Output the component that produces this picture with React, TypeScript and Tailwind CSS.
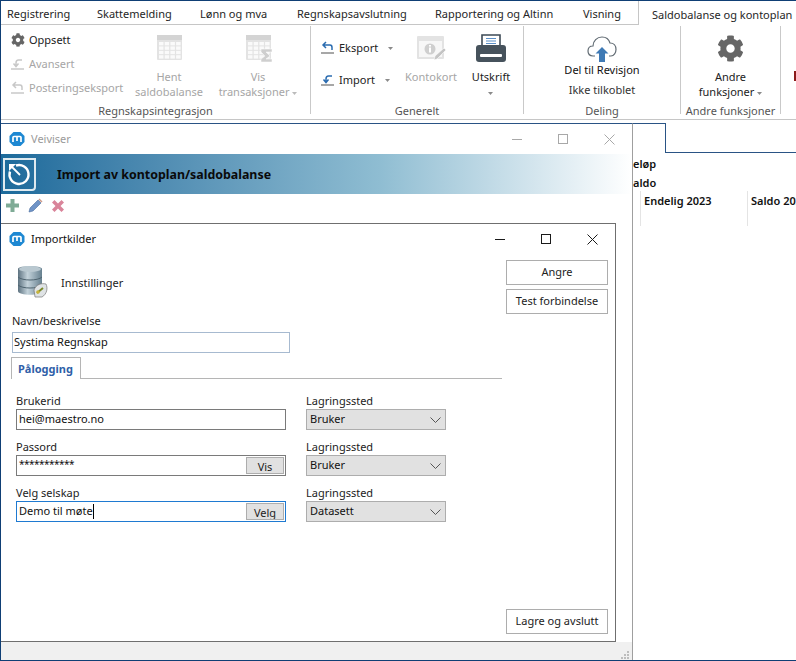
import { FaCog } from "react-icons/fa";

const font = { fontFamily: '"Noto Sans", sans-serif' };

const tabs = [
  { label: "Registrering", w: "w-[90px]" },
  { label: "Skattemelding", w: "w-[103px]" },
  { label: "Lønn og mva", w: "w-[97px]" },
  { label: "Regnskapsavslutning", w: "w-[138px]" },
  { label: "Rapportering og Altinn", w: "w-[148px]" },
  { label: "Visning", w: "w-[47px]" },
];

const Logo = () => (
  <svg width="16" height="16" viewBox="0 0 16 16" className="shrink-0">
    <path d="M4.5 1h7L15.5 5v6L11.500 15h-7L.5 11V5z" fill="#1e88d2" />
    <path d="M4 11V6.500q0-1 1-1h6q1 0 1 1V11M8 6v4" stroke="#fff" strokeWidth="1.700" fill="none" />
  </svg>
);

const ArrowBack = ({ color = "#2b6cb0" }: { color?: string }) => (
  <svg width="14" height="14" viewBox="0 0 14 14">
    <path d="M5 1 2 4l3 3M2.500 4H9q2 0 2 2.500V9" stroke={color} strokeWidth="1.500" fill="none" />
    <path d="M0 12h13" stroke={color === "#2b6cb0" ? "#8a8a8a" : color} strokeWidth="1.500" />
  </svg>
);

const ArrowIn = ({ color = "#2b6cb0" }: { color?: string }) => (
  <svg width="14" height="14" viewBox="0 0 14 14">
    <path d="M11 3H7.500Q5 3 5 6v3M2.500 6.500 5 9.500l2.500-3" stroke={color} strokeWidth="1.500" fill="none" />
    <path d="M0 12h13" stroke={color === "#2b6cb0" ? "#8a8a8a" : color} strokeWidth="1.500" />
  </svg>
);

const Caret = ({ color = "#8a8a8a" }: { color?: string }) => (
  <svg width="5" height="3" viewBox="0 0 5 3" className="inline-block">
    <path d="M0 0h5L2.500 3z" fill={color} />
  </svg>
);

const GridIcon = ({ sigma }: { sigma?: boolean }) => (
  <svg width="30" height="28" viewBox="0 0 30 28">
    <rect x="3" y="1" width="25" height="25" rx="1" fill="#e3e3e3" />
    <rect x="3" y="1" width="25" height="5" fill="#d4d4d4" />
    {[0, 1, 2, 3].map((r) =>
      [0, 1, 2, 3].map((c) => (
        <rect key={`${r}-${c}`} x={5 + c * 5.700} y={8 + r * 4.400} width="4.500" height="3.400" fill="#fafafa" />
      )),
    )}
    {sigma && <path d="M18 15h11v3h-6l4 4-4 3h6v3H18v-3l4-3-4-4z" fill="#cfcfcf" stroke="#fff" strokeWidth="0.500" />}
  </svg>
);

const SmallAction = ({ icon, label, muted }: { icon: React.ReactNode; label: string; muted?: boolean }) => (
  <div className="flex items-center gap-[4px] h-[24px]">
    <span className="w-[14px] h-[14px] flex items-center justify-center">{icon}</span>
    <span className={muted ? "text-[#a6a6a6]" : "text-[#222]"}>{label}</span>
  </div>
);

const BigAction = ({
  icon,
  lines,
  muted,
  w,
}: {
  icon: React.ReactNode;
  lines: React.ReactNode[];
  muted?: boolean;
  w: string;
}) => (
  <div className={`flex flex-col items-center ${w} ${muted ? "text-[#a6a6a6]" : "text-[#222]"}`}>
    <div className="h-[36px] flex items-end justify-center">{icon}</div>
    <div className="mt-[7px] leading-[15px] text-center whitespace-nowrap">
      {lines.map((l, i) => (
        <div key={i}>{l}</div>
      ))}
    </div>
  </div>
);

const Group = ({ w, label, children }: { w: string; label: string; children: React.ReactNode }) => (
  <div className={`${w} h-[88px] flex flex-col shrink-0 border-r border-[#c9c9c9]`}>
    <div className="h-[77px] shrink-0 flex">{children}</div>
    <div className="text-center text-[#555] leading-[16px] whitespace-nowrap">{label}</div>
  </div>
);

const WinButtons = ({ dark }: { dark?: boolean }) => {
  const c = dark ? "#1a1a1a" : "#a8a8a8";
  return (
    <div className="flex items-center gap-[35px]">
      <svg width="11" height="11" viewBox="0 0 11 11">
        <path d="M0 5.500h10" stroke={c} />
      </svg>
      <svg width="11" height="11" viewBox="0 0 11 11">
        <rect x=".5" y=".5" width="9" height="9" stroke={c} fill="none" />
      </svg>
      <svg width="11" height="11" viewBox="0 0 11 11">
        <path d="M.5.5l10 10M10.500.5l-10 10" stroke={c} />
      </svg>
    </div>
  );
};

const FieldRow = ({
  label,
  value,
  storage,
  button,
  focused,
  caret,
  masked,
}: {
  label: string;
  value: string;
  storage: string;
  button?: string;
  focused?: boolean;
  caret?: boolean;
  masked?: boolean;
}) => (
  <div className="flex gap-[20px] h-[46px]">
    <div className="w-[270px]">
      <div className="h-[16px] leading-[16px] text-[#222]">{label}</div>
      <div
        className={`h-[21px] border flex items-center justify-between pl-[2px] pr-[1px] ${
          focused ? "border-[#1f7ad1]" : "border-[#7a7a7a]"
        }`}
      >
        <span className={`flex items-center text-[#111] ${masked ? "text-[10px] tracking-[-0.5px] -mt-[3px]" : ""}`}>
          {value}
          {caret && <span className="w-px h-[15px] bg-black" />}
        </span>
        {button && (
          <span className="w-[38px] h-[17px] bg-[#e1e1e1] border border-[#adadad] leading-[17px] text-center overflow-hidden text-[#222]">
            {button}
          </span>
        )}
      </div>
    </div>
    <div className="w-[140px]">
      <div className="h-[16px] leading-[16px] text-[#222]">Lagringssted</div>
      <div className="h-[21px] bg-[#e1e1e1] border border-[#adadad] flex items-center justify-between pl-[3px] pr-[4px] text-[#111]">
        {storage}
        <svg width="11" height="6" viewBox="0 0 11 6">
          <path d="M.5.500l5 5 5-5" stroke="#555" fill="none" />
        </svg>
      </div>
    </div>
  </div>
);

const SideButton = ({ label }: { label: string }) => (
  <div className="w-[102px] h-[25px] border border-[#adadad] flex items-center justify-center text-[#222] whitespace-nowrap">
    {label}
  </div>
);

const DbIcon = () => (
  <svg width="32" height="33" viewBox="0 0 32 33">
    <defs>
      <linearGradient id="db" x1="0" x2="1" y1="0" y2="0">
        <stop offset="0" stopColor="#5d7280" />
        <stop offset=".4" stopColor="#c3d2da" />
        <stop offset="1" stopColor="#66808f" />
      </linearGradient>
    </defs>
    <path d="M1 4c0-4 24-4 24 0v22c0 5-24 5-24 0z" fill="url(#db)" />
    <ellipse cx="13" cy="4" rx="11" ry="3" fill="#b9c8d0" />
    <path d="M1 12c4 4 20 4 24 0M1 20c4 4 20 4 24 0" stroke="#4f6470" fill="none" />
    <path d="M17 25c2-6 8-7 12-6 2 4 1 10-4 13H18z" fill="#dfe3e5" stroke="#777" strokeWidth=".7" />
    <path d="M20 28l6-5" stroke="#7a8a2a" strokeWidth="2" />
    <circle cx="21" cy="27" r="1.800" fill="#c9b53a" />
  </svg>
);

export default function App() {
  return (
    <div
      style={font}
      className="w-[796px] h-[661px] overflow-hidden bg-white border-l border-y border-[#0f3f75] text-[11px] flex flex-col relative"
    >
      <div className="h-[24px] flex border-b border-[#c6c6c6] shrink-0 relative">
        <div className="flex text-[#262626] pl-[6px] leading-[26px]">
          {tabs.map((t) => (
            <div key={t.label} className={`${t.w} whitespace-nowrap`}>
              {t.label}
            </div>
          ))}
        </div>
        <div className="absolute left-[637px] top-0 h-[24px] w-[170px] bg-white border-l border-[#c6c6c6] pl-[13px] leading-[28px] text-[#262626] whitespace-nowrap">
          Saldobalanse og kontoplan
        </div>
      </div>

      <div className="h-[95px] shrink-0 flex pt-[1px] border-b border-[#c6c6c6]">
        <Group w="w-[310px]" label="Regnskapsintegrasjon">
          <div className="pl-[10px] w-[128px] pt-[2px]">
            <SmallAction icon={<FaCog size={14} color="#666" />} label="Oppsett" />
            <SmallAction icon={<ArrowIn color="#c8c8c8" />} label="Avansert" muted />
            <SmallAction icon={<ArrowBack color="#c8c8c8" />} label="Posteringseksport" muted />
          </div>
          <BigAction w="w-[80px]" icon={<GridIcon />} lines={["Hent", "saldobalanse"]} muted />
          <BigAction
            w="w-[98px]"
            icon={<GridIcon sigma />}
            lines={[
              "Vis",
              <>
                transaksjoner <Caret color="#bbb" />
              </>,
            ]}
            muted
          />
        </Group>

        <Group w="w-[213px]" label="Generelt">
          <div className="pl-[10px] w-[88px] pt-[6px]">
            <div className="flex items-center gap-[4px] h-[32px] text-[#222]">
              <ArrowBack />
              Eksport <span className="ml-[6px]"><Caret /></span>
            </div>
            <div className="flex items-center gap-[4px] h-[32px] text-[#222]">
              <ArrowIn />
              Import <span className="ml-[6px]"><Caret /></span>
            </div>
          </div>
          <BigAction
            w="w-[64px]"
            muted
            lines={["Kontokort"]}
            icon={
              <svg width="30" height="27" viewBox="0 0 30 27">
                <rect x="1" y="1" width="27" height="23" rx="1" fill="#e3e3e3" />
                <rect x="3" y="6" width="23" height="16" fill="#f7f7f7" />
                <circle cx="14" cy="14" r="5.500" fill="#cfcfcf" />
                <rect x="13" y="12.500" width="2" height="5" fill="#fff" />
                <rect x="13" y="10" width="2" height="1.600" fill="#fff" />
                <path d="M18 25l1-4 9-8 2 2-9 9z" fill="#c4c4c4" stroke="#fff" strokeWidth=".6" />
              </svg>
            }
          />
          <BigAction
            w="w-[56px]"
            lines={["Utskrift", <Caret />]}
            icon={
              <svg width="30" height="28" viewBox="0 0 30 28">
                <path d="M6 1h18v12H6z" fill="#fff" stroke="#3d4a55" strokeWidth="1.600" />
                <path d="M10 4.500h10M10 7h10M10 9.500h10" stroke="#5b8fc7" />
                <path d="M3 11h24q3 0 3 3v11q0 3-3 3H3q-3 0-3-3V14q0-3 3-3z" fill="#46525c" />
                <rect x="4" y="20" width="22" height="3" rx="1" fill="#fff" />
              </svg>
            }
          />
        </Group>

        <Group w="w-[157px]" label="Deling">
          <div className="w-full flex flex-col items-center text-[#111] pt-[7px]">
            <svg width="30" height="30" viewBox="0 0 30 30">
              <path
                d="M8 23H6C2.500 23 1 20.500 1 18c0-3 2-5 5-5 0-5 4-9 9-9 4 0 7 2.500 8 6 4 0 6 3 6 6.500 0 3-2 6.500-5 6.500h-2"
                fill="#fff"
                stroke="#606a72"
                strokeWidth="1.200"
              />
              <path d="M15 14l6.500 6.500H18V29h-6v-8.500H8.500z" fill="#3f7ab5" />
            </svg>
            <div className="-mt-[3px] leading-[20px]">Del til Revisjon</div>
            <div className="leading-[20px] text-[#333]">Ikke tilkoblet</div>
          </div>
        </Group>

        <Group w="w-[100px]" label="Andre funksjoner">
          <BigAction
            w="w-full"
            icon={<FaCog size={27} color="#666" />}
            lines={[
              "Andre",
              <>
                funksjoner <Caret />
              </>,
            ]}
          />
        </Group>
        <div className="w-[15px] relative">
          <span className="absolute left-[13px] top-[45px] w-[2px] h-[10px] bg-[#8b1a1a]" />
        </div>
      </div>

      <div className="flex-1 relative">
        {/* tabell bak veiviseren */}
        <div className="absolute left-[632px] top-[3px] w-[33px] h-[30px] border-r border-t border-[#2a5485]" />
        <div className="absolute left-[664px] top-[32px] right-0 border-t border-[#2a5485]" />
        <div className="absolute left-[632px] top-[36px] font-semibold text-[#111] leading-[16px] whitespace-nowrap">
          <div className="h-[19px]">eløp</div>
          <div className="h-[19px]">aldo</div>
        </div>
        <div className="absolute left-[639px] top-[71px] w-px h-[35px] bg-[#e4e4e4]" />
        <div className="absolute left-[746px] top-[71px] w-px h-[35px] bg-[#e4e4e4]" />
        <div className="absolute left-[643px] top-[73px] font-semibold text-[#111] leading-[16px] whitespace-nowrap">
          Endelig 2023
        </div>
        <div className="absolute left-[750px] top-[73px] font-semibold text-[#111] leading-[16px] whitespace-nowrap">
          Saldo 2023
        </div>

        {/* veiviser */}
        <div className="absolute left-0 top-[3px] w-[632px] bottom-0 bg-white border-r border-r-[#9f9f9f] border-t border-t-[#2a5485] flex flex-col">
          <div className="h-[30px] shrink-0 flex items-center pl-[8px] pr-[17px]">
            <Logo />
            <span className="ml-[6px] text-[#9a9a9a] flex-1">Veiviser</span>
            <WinButtons />
          </div>
          <div className="h-[40px] shrink-0 flex items-center bg-gradient-to-r from-[#1b6a9b] via-[#8fbdd2] via-[60%] to-white pl-[2px]">
            <div className="w-[33px] h-[33px] border-2 border-[#dfeaf0] rounded-br-[4px] flex items-center justify-center">
              <svg width="25" height="25" viewBox="0 0 25 25">
                <path d="M9 3.500a9.500 9.500 0 1 1-6 6" stroke="#fff" strokeWidth="2.400" fill="none" />
                <path d="M4 4l9 9" stroke="#fff" strokeWidth="1.800" />
                <path d="M2 9V2h7z" fill="#fff" />
              </svg>
            </div>
            <span className="ml-[21px] mt-[2px] font-bold text-[12.400px] text-[#0a0a0a] whitespace-nowrap">
              Import av kontoplan/saldobalanse
            </span>
          </div>
          <div className="h-[29px] shrink-0 flex items-center gap-[8px] pl-[4px] pb-[6px]">
            <svg width="15" height="15" viewBox="0 0 15 15">
              <path d="M5.500 1h4v4.500H14v4H9.500V14h-4V9.500H1v-4h4.500z" fill="#7fab96" />
            </svg>
            <svg width="15" height="15" viewBox="0 0 15 15">
              <path d="M1 14l1-4 8-8 3 3-8 8z" fill="#6f93c6" stroke="#4a6da0" strokeWidth=".6" />
              <path d="M11 1l3 3" stroke="#c98" strokeWidth="1.500" />
            </svg>
            <svg width="14" height="14" viewBox="0 0 14 14">
              <path d="M3.500 1 7 4.500 10.500 1 13 3.500 9.500 7 13 10.500 10.500 13 7 9.500 3.500 13 1 10.500 4.500 7 1 3.500z" fill="#d9849a" />
            </svg>
          </div>

          {/* importkilder */}
          <div className="w-[615px] h-[419px] shrink-0 bg-white border-r border-y border-[#6f6f6f] flex flex-col text-[#222]">
            <div className="h-[30px] shrink-0 flex items-center pl-[8px] pr-[17px]">
              <Logo />
              <span className="ml-[6px] text-[#111] flex-1">Importkilder</span>
              <WinButtons dark />
            </div>
            <div className="flex flex-1 min-h-0">
              <div className="w-[505px] shrink-0 pl-[11px]">
                <div className="h-[38px] mt-[8px] pl-[5px] flex items-center">
                  <DbIcon />
                  <span className="ml-[12px] mt-[4px]">Innstillinger</span>
                </div>
                <div className="mt-[13px] leading-[16px] h-[19px]">Navn/beskrivelse</div>
                <div className="w-[278px] h-[21px] border border-[#a7bad0] pl-[1px] leading-[18px] text-[#111]">Systima Regnskap</div>
                <div className="mt-[4px] -ml-[1px] w-[491px] h-[22px] border-b border-[#b5b5b5] flex">
                  <div className="w-[70px] h-[22px] border-x border-t border-[#b5b5b5] bg-white font-bold text-[#2f5fa8] pl-[6px] leading-[22px]">
                    Pålogging
                  </div>
                </div>
                <div className="pl-[4px] pt-[14px]">
                  <FieldRow label="Brukerid" value="hei@maestro.no" storage="Bruker" />
                  <FieldRow label="Passord" value="***********" storage="Bruker" button="Vis" masked />
                  <FieldRow label="Velg selskap" value="Demo til møte" storage="Datasett" button="Velg" focused caret />
                </div>
              </div>
              <div className="flex flex-col gap-[4px] pt-[6px] pb-[7px] h-full">
                <SideButton label="Angre" />
                <SideButton label="Test forbindelse" />
                <div className="flex-1" />
                <SideButton label="Lagre og avslutt" />
              </div>
            </div>
          </div>
          <div className="flex-1 bg-[#f0f0f0] relative">
            <svg width="11" height="11" viewBox="0 0 11 11" className="absolute right-[2px] bottom-0">
              <path d="M8 2h2v2H8zM5 5h2v2H5zM8 5h2v2H8zM2 8h2v2H2zM5 8h2v2H5zM8 8h2v2H8z" fill="#bdbdbd" />
            </svg>
          </div>
        </div>
      </div>
    </div>
  );
}
